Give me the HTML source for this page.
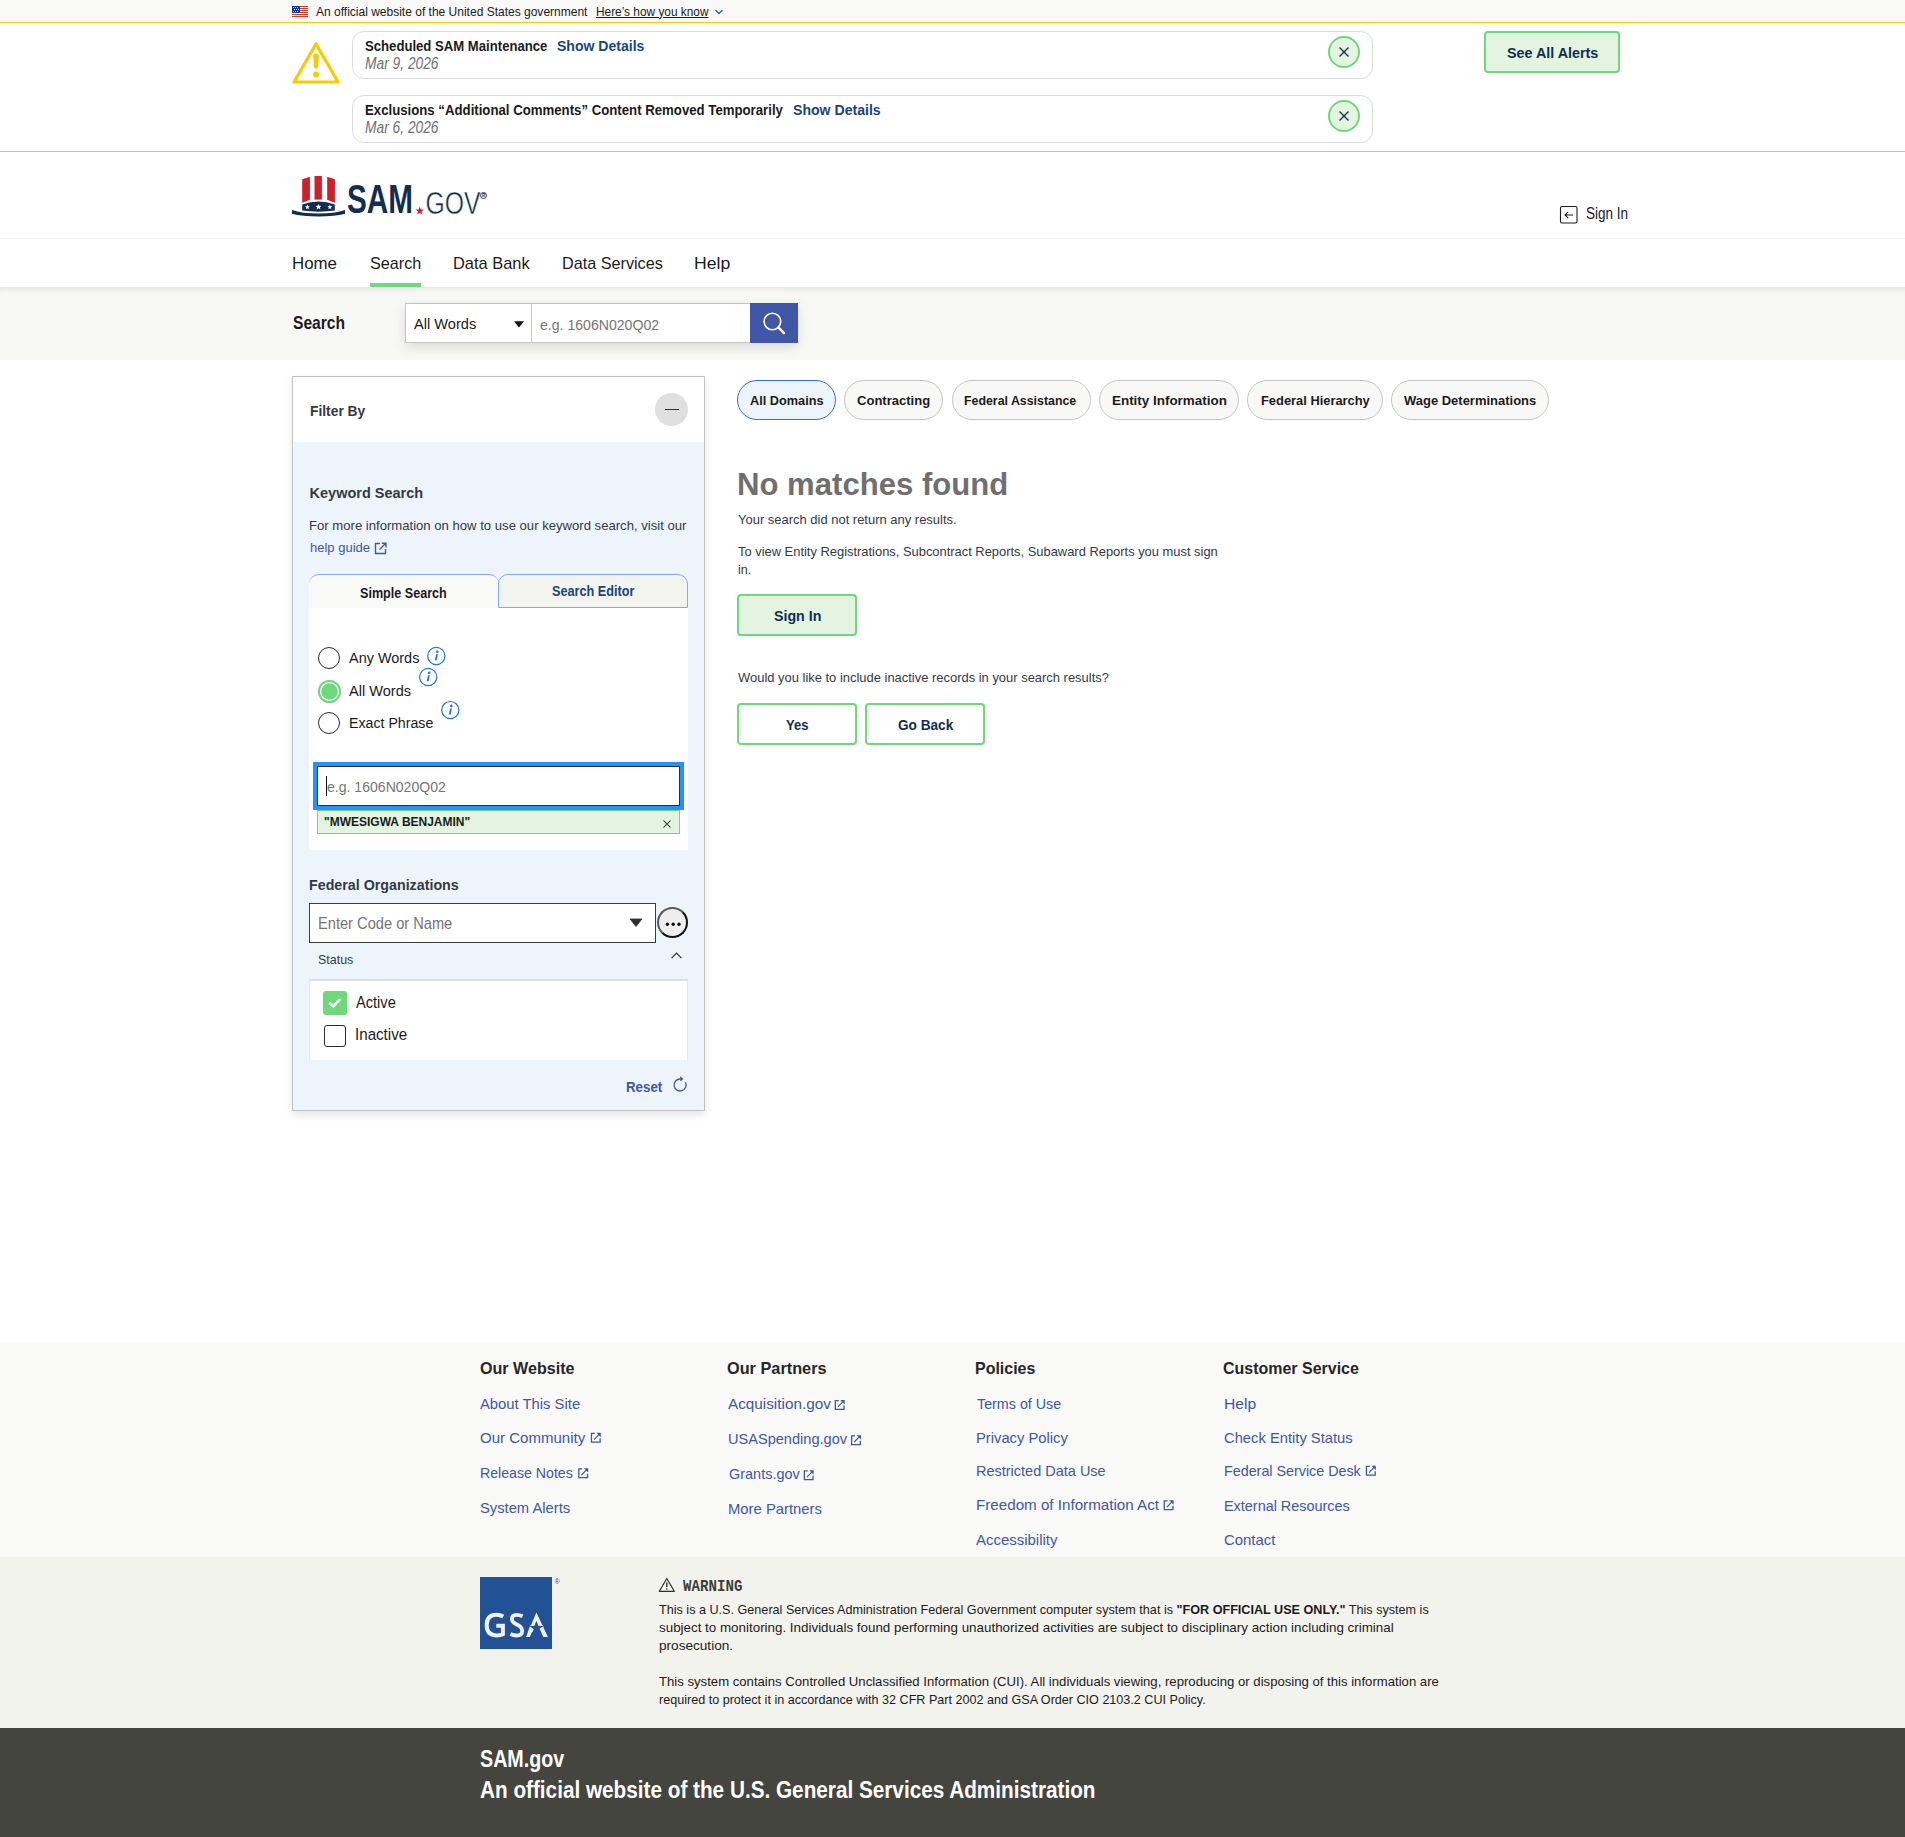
<!DOCTYPE html>
<html><head><meta charset="utf-8"><title>SAM.gov Search</title>
<style>
html,body{margin:0;padding:0;}
body{width:1905px;height:1837px;position:relative;overflow:hidden;background:#fff;font-family:"Liberation Sans",sans-serif;}
.a{position:absolute;box-sizing:border-box;}
.t{position:absolute;line-height:1;white-space:pre;transform-origin:0 0;}
svg.a{overflow:visible;}

</style></head><body>
<!-- gov banner -->
<div class="a" style="left:0;top:0;width:1905px;height:22px;background:#f9f9f7"></div>
<div class="a" style="left:0;top:22px;width:1905px;height:1px;background:#fbcb0a"></div>
<svg class="a" style="left:292px;top:6px" width="16" height="11" viewBox="0 0 16 11">
  <rect width="16" height="11" fill="#fff"/>
  <g fill="#d83b1e"><rect y="0" width="16" height="1"/><rect y="2" width="16" height="1"/><rect y="4" width="16" height="1"/><rect y="6" width="16" height="1"/><rect y="8" width="16" height="1"/><rect y="10" width="16" height="1"/></g>
  <rect width="8" height="7" fill="#0d3a9c"/>
  <g fill="#fff"><circle cx="1.5" cy="1.5" r=".5"/><circle cx="3.5" cy="1.5" r=".5"/><circle cx="5.5" cy="1.5" r=".5"/><circle cx="2.5" cy="3.5" r=".5"/><circle cx="4.5" cy="3.5" r=".5"/><circle cx="6.5" cy="3.5" r=".5"/><circle cx="1.5" cy="5.5" r=".5"/><circle cx="3.5" cy="5.5" r=".5"/><circle cx="5.5" cy="5.5" r=".5"/></g>
</svg>
<svg class="a" style="left:714px;top:8px" width="10" height="8" viewBox="0 0 10 8"><path d="M1.5 2 L5 5.5 L8.5 2" fill="none" stroke="#2a5fb0" stroke-width="1.4"/></svg>

<!-- alerts -->
<div class="a" style="left:0;top:151px;width:1905px;height:1px;background:#fbcb0a"></div>
<svg class="a" style="left:291px;top:41px" width="50" height="44" viewBox="0 0 50 44">
  <path d="M25 3 L47 41 L3 41 Z" fill="none" stroke="#f8cb00" stroke-width="3.2" stroke-linejoin="round"/>
  <path d="M22.2 15.2 Q22.2 12.6 25 12.6 Q27.8 12.6 27.8 15.2 L26.9 26.6 Q26.8 27.6 25 27.6 Q23.2 27.6 23.1 26.6 Z" fill="#f8cb00"/>
  <circle cx="25" cy="33.5" r="3" fill="#f8cb00"/>
</svg>
<div class="a" style="left:352px;top:31px;width:1021px;height:48px;border:1px solid #dcdcdc;border-radius:12px"></div>
<div class="a" style="left:352px;top:95px;width:1021px;height:48px;border:1px solid #dcdcdc;border-radius:12px"></div>
<div class="a" style="left:1328px;top:36px;width:32px;height:32px;border:2px solid #6fd87a;border-radius:50%;background:#e3f4e1"></div>
<div class="a" style="left:1328px;top:100px;width:32px;height:32px;border:2px solid #6fd87a;border-radius:50%;background:#e3f4e1"></div>
<svg class="a" style="left:1338px;top:46px" width="12" height="12" viewBox="0 0 12 12"><path d="M1.5 1.5 L10.5 10.5 M10.5 1.5 L1.5 10.5" stroke="#1b2b48" stroke-width="1.4"/></svg>
<svg class="a" style="left:1338px;top:110px" width="12" height="12" viewBox="0 0 12 12"><path d="M1.5 1.5 L10.5 10.5 M10.5 1.5 L1.5 10.5" stroke="#1b2b48" stroke-width="1.4"/></svg>
<div class="a" style="left:1484px;top:31px;width:136px;height:42px;border:2px solid #6fd87a;border-radius:4px;background:#e3f4e1"></div>

<!-- header logo -->
<svg class="a" style="left:288px;top:170px" width="60" height="50" viewBox="288 170 60 50">
  <g fill="#cf1f2a">
    <path d="M302.2 179.2 L309.9 176.8 L309.9 199.8 L302.2 202.8 Z"/>
    <path d="M314.5 176 L321.9 176 L321.9 199.6 L314.5 199.6 Z"/>
    <path d="M327.2 176.8 L334.9 179.2 L334.9 202.8 L327.2 199.8 Z"/>
  </g>
  <g fill="#112e51">
    <path d="M302.2 204.6 Q318.5 198.5 334.8 204.6 L334.8 210.6 Q318.5 212.8 302.2 210.6 Z"/>
    <path d="M292 210 Q302 213.5 318.5 213.5 Q335 213.5 345 210 L345 213.8 Q335 216.5 318.5 216.5 Q302 216.5 292 213.8 Z"/>
  </g>
  <g fill="#fff">
    <path d="M307.4 204.6 l.75 1.6 1.7.15 -1.3 1.1 .4 1.7 -1.55 -.9 -1.55 .9 .4 -1.7 -1.3 -1.1 1.7 -.15z"/>
    <path d="M318.5 203.9 l.9 1.9 2 .2 -1.5 1.3 .45 2 -1.85 -1.05 -1.85 1.05 .45 -2 -1.5 -1.3 2 -.2z"/>
    <path d="M329.9 204.6 l.75 1.6 1.7.15 -1.3 1.1 .4 1.7 -1.55 -.9 -1.55 .9 .4 -1.7 -1.3 -1.1 1.7 -.15z"/>
  </g>
</svg>
<svg class="a" style="left:340px;top:180px" width="160" height="40" viewBox="340 180 160 40">
  <text x="347" y="213.3" font-family="Liberation Sans" font-weight="700" font-size="40.8" fill="#112e51" textLength="66" lengthAdjust="spacingAndGlyphs">SAM</text>
  <path d="M419.8 206.5 l1.05 2.9 3.1 .1 -2.45 1.9 .85 3 -2.55 -1.75 -2.55 1.75 .85 -3 -2.45 -1.9 3.1 -.1z" fill="#cf1f2a"/>
  <text x="425.5" y="213.7" font-family="Liberation Sans" font-weight="400" font-size="31.5" fill="#112e51" stroke="#fff" stroke-width="0.45" textLength="55" lengthAdjust="spacingAndGlyphs" style="letter-spacing:0">GOV</text>
  <circle cx="483.5" cy="195.5" r="3" fill="none" stroke="#112e51" stroke-width="0.9"/>
  <text x="481.9" y="197.4" font-family="Liberation Sans" font-weight="700" font-size="4.8" fill="#112e51">R</text>
</svg>
<svg class="a" style="left:1559px;top:205px" width="20" height="19" viewBox="0 0 20 19">
  <rect x="1.5" y="1.5" width="16.5" height="16.5" rx="1.5" fill="none" stroke="#1b1b1b" stroke-width="1.1"/>
  <path d="M14 10 L6 10 M9.2 6.8 L6 10 L9.2 13.2" fill="none" stroke="#1b1b1b" stroke-width="1.1"/>
</svg>
<div class="a" style="left:0;top:238px;width:1905px;height:1px;background:#f1f1ed"></div>
<div class="a" style="left:370px;top:283px;width:51px;height:4px;background:#6cdb78"></div>

<!-- search bar -->
<div class="a" style="left:0;top:287px;width:1905px;height:73px;background:#f8f8f6;box-shadow:inset 0 6px 6px -4px rgba(0,0,0,0.09)"></div>
<div class="a" style="left:405px;top:303px;width:393px;height:40px;box-shadow:0 4px 12px rgba(0,0,0,0.13)"></div>
<div class="a" style="left:405px;top:303px;width:127px;height:40px;background:#fff;border:1px solid #c4c4c4"></div>
<svg class="a" style="left:513px;top:320px" width="12" height="9" viewBox="0 0 12 9"><path d="M1 1.2 L11 1.2 L6 7.5 Z" fill="#111"/></svg>
<div class="a" style="left:531px;top:303px;width:220px;height:40px;background:#fff;border:1px solid #c4c4c4"></div>
<div class="a" style="left:750px;top:303px;width:48px;height:40px;background:#3f57a6"></div>
<svg class="a" style="left:760px;top:310px" width="28" height="28" viewBox="760 310 28 28">
  <circle cx="772.4" cy="321.5" r="8.3" fill="none" stroke="#fff" stroke-width="1.6"/>
  <path d="M778.3 327.4 L784 333.1" stroke="#fff" stroke-width="2.2" stroke-linecap="round"/>
</svg>

<!-- filter panel -->
<div class="a" style="left:292px;top:376px;width:413px;height:735px;background:#edf4fb;border:1px solid #c2c2c2;box-shadow:0 4px 8px rgba(0,0,0,0.11)"></div>
<div class="a" style="left:293px;top:377px;width:411px;height:65px;background:#fff"></div>
<div class="a" style="left:655px;top:393px;width:33px;height:33px;border-radius:50%;background:#e0e0e0"></div>
<div class="a" style="left:665px;top:408.7px;width:14px;height:1.6px;background:#13316b"></div>
<svg class="a" style="left:374px;top:542px" width="14" height="13" viewBox="0 0 14 13">
  <path d="M6 1.5 L1.5 1.5 L1.5 11.5 L11.5 11.5 L11.5 7" fill="none" stroke="#3f57a6" stroke-width="1.4"/>
  <path d="M5.5 7.5 L11.5 1.5 M7.8 1.2 L12 1.2 L12 5.4" fill="none" stroke="#3f57a6" stroke-width="1.4"/>
</svg>
<!-- tabs -->
<div class="a" style="left:309px;top:574px;width:190px;height:34px;background:#f9f9f7;border-top:1px solid #80aaff;border-radius:10px 10px 0 0"></div>
<div class="a" style="left:498px;top:574px;width:190px;height:34px;background:#f3f3ef;border:1px solid #80aaff;border-radius:10px 10px 0 0"></div>
<div class="a" style="left:309px;top:608px;width:379px;height:242px;background:#fff"></div>
<!-- radios -->
<div class="a" style="left:318px;top:646.7px;width:22px;height:22px;border:1.5px solid #2b2b2b;border-radius:50%"></div>
<div class="a" style="left:317.5px;top:679.5px;width:23px;height:23px;border-radius:50%;background:#6fd87a;box-shadow:inset 0 0 0 2px #6fd87a, inset 0 0 0 3.2px #fff"></div>
<div class="a" style="left:318px;top:712px;width:22px;height:22px;border:1.5px solid #2b2b2b;border-radius:50%"></div>
<svg class="a" style="left:425px;top:645px" width="40" height="80" viewBox="425 645 40 80">
  <g fill="none" stroke="#2672de" stroke-width="1.2">
    <circle cx="436.3" cy="656" r="8.6"/><circle cx="428.2" cy="677" r="8.6"/><circle cx="450.3" cy="710.1" r="8.6"/>
  </g>
  <g fill="#2672de">
    <circle cx="437.3" cy="651.8" r="1.3"/><path d="M436.1 654.3 L437.9 654.3 L436.7 660.3 L434.8 660.3 Z"/>
    <circle cx="429.2" cy="672.8" r="1.3"/><path d="M428 675.3 L429.8 675.3 L428.6 681.3 L426.7 681.3 Z"/>
    <circle cx="451.3" cy="705.9" r="1.3"/><path d="M450.1 708.4 L451.9 708.4 L450.7 714.4 L448.8 714.4 Z"/>
  </g>
</svg>
<!-- focused input -->
<div class="a" style="left:313px;top:762px;width:371px;height:48px;background:#2491ff"></div>
<div class="a" style="left:317px;top:766px;width:363px;height:40px;background:#fff;border:1.5px solid #2e2e2a"></div>
<div class="a" style="left:326px;top:776px;width:1px;height:20px;background:#111"></div>
<div class="a" style="left:317px;top:810px;width:363px;height:24px;background:#e3f4e1;border:1px solid #6fd87a"></div>
<svg class="a" style="left:662px;top:818.5px" width="10" height="10" viewBox="0 0 10 10"><path d="M1.5 1.5 L8.5 8.5 M8.5 1.5 L1.5 8.5" stroke="#1b1b1b" stroke-width="1.05"/></svg>
<!-- federal orgs -->
<div class="a" style="left:309px;top:903px;width:347px;height:40px;background:#fff;border:1px solid #3b3b37"></div>
<svg class="a" style="left:629px;top:918px" width="14" height="10" viewBox="0 0 14 10"><path d="M1 1 L13 1 L7 8.5 Z" fill="#2e2e2a" stroke="#2e2e2a" stroke-width="0.8" stroke-linejoin="round"/></svg>
<div class="a" style="left:657px;top:907px;width:31px;height:31px;border-radius:50%;background:#eeeeee;border:2px solid #111;border-color:#5a5a5a #111 #111 #5a5a5a"></div>
<svg class="a" style="left:660px;top:917px" width="26" height="14" viewBox="660 917 26 14">
  <circle cx="667.4" cy="924.3" r="1.7" fill="#111"/><circle cx="673.2" cy="924.3" r="1.7" fill="#111"/><circle cx="679" cy="924.3" r="1.7" fill="#111"/>
</svg>
<svg class="a" style="left:670px;top:950px" width="13" height="10" viewBox="670 950 13 10"><path d="M671.6 958.1 L676.5 953 L681.4 958.1" fill="none" stroke="#2e2e2a" stroke-width="1.2"/></svg>
<!-- status -->
<div class="a" style="left:309px;top:979px;width:379px;height:81px;background:#fff;border-top:2px solid #dedede;border-left:1px solid #e8e8e8;border-right:1px solid #e8e8e8"></div>
<div class="a" style="left:323px;top:991px;width:24px;height:24px;border-radius:3px;background:#6fd87a"></div>
<svg class="a" style="left:323px;top:991px" width="24" height="24" viewBox="0 0 24 24"><path d="M7 12.3 L10.3 15.4 L16.5 8.8" fill="none" stroke="#fff" stroke-width="2.6" stroke-linecap="round" stroke-linejoin="round"/></svg>
<div class="a" style="left:324px;top:1025px;width:22px;height:22px;border-radius:3px;border:1.5px solid #2b2b2b;background:#fff"></div>
<svg class="a" style="left:671px;top:1074px" width="18" height="20" viewBox="671 1074 18 20">
  <path d="M685.4 1082.2 A6 6 0 1 1 680.3 1079" fill="none" stroke="#3f57a6" stroke-width="1.3"/>
  <path d="M680.2 1076 L683.4 1078.9 L680.2 1081.5 Z" fill="#3f57a6"/>
</svg>

<!-- pills -->
<div class="a" style="left:737px;top:380px;width:99px;height:40px;border-radius:20px;border:1px solid #2d6fe0;background:#edf4fb"></div>
<div class="a" style="left:844px;top:380px;width:99px;height:40px;border-radius:20px;border:1px solid #c6c6c6;background:#f8f8f6"></div>
<div class="a" style="left:951.5px;top:380px;width:139px;height:40px;border-radius:20px;border:1px solid #c6c6c6;background:#f8f8f6"></div>
<div class="a" style="left:1099px;top:380px;width:139.5px;height:40px;border-radius:20px;border:1px solid #c6c6c6;background:#f8f8f6"></div>
<div class="a" style="left:1247px;top:380px;width:135.5px;height:40px;border-radius:20px;border:1px solid #c6c6c6;background:#f8f8f6"></div>
<div class="a" style="left:1391px;top:380px;width:157.5px;height:40px;border-radius:20px;border:1px solid #c6c6c6;background:#f8f8f6"></div>

<!-- result buttons -->
<div class="a" style="left:737px;top:594px;width:120px;height:42px;border:2px solid #6fd87a;border-radius:4px;background:#e3f4e1"></div>
<div class="a" style="left:737px;top:703px;width:120px;height:42px;border:2px solid #6fd87a;border-radius:4px;background:#fff"></div>
<div class="a" style="left:865px;top:703px;width:120px;height:42px;border:2px solid #6fd87a;border-radius:4px;background:#fff"></div>

<!-- footer -->
<div class="a" style="left:0;top:1343px;width:1905px;height:214px;background:#f9f9f7"></div>
<div class="a" style="left:0;top:1557px;width:1905px;height:171px;background:#f3f3ee"></div>
<div class="a" style="left:0;top:1728px;width:1905px;height:109px;background:#454540"></div>
<!-- footer ext icons -->
<svg class="a" style="left:0;top:0" width="1905" height="1837" viewBox="0 0 1905 1837">
  <defs>
    <g id="ext">
      <path d="M4 0.65 L0.65 0.65 L0.65 9.35 L9.35 9.35 L9.35 5.5" fill="none" stroke="#3f57a6" stroke-width="1.3"/>
      <path d="M3.2 6.8 L8.6 1.4" fill="none" stroke="#3f57a6" stroke-width="1.2"/>
      <path d="M5.6 0 L10 0 L10 4.4 Z" fill="#3f57a6"/>
    </g>
  </defs>
  <use href="#ext" x="590.8" y="1432.8"/>
  <use href="#ext" x="578.2" y="1468.2"/>
  <use href="#ext" x="834.7" y="1400"/>
  <use href="#ext" x="851" y="1435.2"/>
  <use href="#ext" x="803.7" y="1470.3"/>
  <use href="#ext" x="1163.6" y="1500.3"/>
  <use href="#ext" x="1365.8" y="1465.8"/>
</svg>
<!-- GSA logo -->
<div class="a" style="left:480px;top:1577px;width:72px;height:72px;background:#225196"></div>
<svg class="a" style="left:480px;top:1577px" width="90" height="80" viewBox="480 1577 90 80">
  <g fill="none" stroke="#f1f1ed">
    <path d="M503.3 1616.6 Q500.2 1614.8 496.3 1614.8 Q486.7 1615 486.7 1625.1 Q486.7 1635.4 496.3 1635.4 Q500.6 1635.4 502.9 1634.2 L502.9 1625.7 L496.3 1625.7" stroke-width="4"/>
    <path d="M522.6 1616.2 Q519.6 1614.8 516.6 1614.8 Q511.9 1614.9 511.9 1619.1 Q511.9 1622.3 516.8 1624.5 Q522.2 1626.9 522.2 1630.9 Q522.2 1635.5 516.4 1635.5 Q513.2 1635.5 510.5 1634" stroke-width="3.8"/>
  </g>
  <path d="M536.4 1612.6 L547.9 1637 L543.3 1637 L536.4 1621.6 L529.8 1637 L526 1637 Z" fill="#f1f1ed"/>
  <path d="M530 1625.6 L543 1625.6 L543.6 1627.4 L531 1632.5 L529.4 1635.8 L527.6 1633.2 Z" fill="#f1f1ed"/>
  <polygon points="536.40,1620.80 538.10,1625.85 543.44,1625.91 539.16,1629.10 540.75,1634.19 536.40,1631.10 532.05,1634.19 533.64,1629.10 529.36,1625.91 534.70,1625.85" fill="#225196"/>
  <text x="554.5" y="1583.5" font-family="Liberation Sans" font-size="7" fill="#225196">&#174;</text>
</svg>
<!-- warning triangle -->
<svg class="a" style="left:657px;top:1576px" width="20" height="18" viewBox="657 1576 20 18">
  <path d="M666.8 1578.5 L674.3 1591.3 L659.3 1591.3 Z" fill="none" stroke="#2e2e2a" stroke-width="1.2" stroke-linejoin="round"/>
  <path d="M666.8 1582.5 L666.8 1587" stroke="#2e2e2a" stroke-width="1.4"/>
  <circle cx="666.8" cy="1589" r="0.8" fill="#2e2e2a"/>
</svg>

<div class='t' style='left:315.70px;top:4.58px;font-family:"Liberation Sans", sans-serif;font-size:13.043px;font-weight:400;color:#1b1b1b;transform:scaleX(0.9214)'>An official website of the United States government</div>
<div class='t' style='left:596.00px;top:4.58px;font-family:"Liberation Sans", sans-serif;font-size:13.043px;font-weight:400;color:#1b1b1b;text-decoration:underline;text-underline-offset:1px;transform:scaleX(0.9097)'>Here’s how you know</div>
<div class='t' style='left:365.30px;top:39.45px;font-family:"Liberation Sans", sans-serif;font-size:14.493px;font-weight:700;color:#1b1b1b;transform:scaleX(0.9065)'>Scheduled SAM Maintenance</div>
<div class='t' style='left:556.60px;top:39.45px;font-family:"Liberation Sans", sans-serif;font-size:14.493px;font-weight:700;color:#1a4480;transform:scaleX(0.9689)'>Show Details</div>
<div class='t' style='left:365.30px;top:55.67px;font-family:"Liberation Sans", sans-serif;font-size:15.652px;font-weight:400;color:#6f6f6f;font-style:italic;transform:scaleX(0.8810)'>Mar 9, 2026</div>
<div class='t' style='left:365.30px;top:103.45px;font-family:"Liberation Sans", sans-serif;font-size:14.493px;font-weight:700;color:#1b1b1b;transform:scaleX(0.9115)'>Exclusions “Additional Comments” Content Removed Temporarily</div>
<div class='t' style='left:792.90px;top:103.45px;font-family:"Liberation Sans", sans-serif;font-size:14.493px;font-weight:700;color:#1a4480;transform:scaleX(0.9722)'>Show Details</div>
<div class='t' style='left:365.30px;top:119.67px;font-family:"Liberation Sans", sans-serif;font-size:15.652px;font-weight:400;color:#6f6f6f;font-style:italic;transform:scaleX(0.8810)'>Mar 6, 2026</div>
<div class='t' style='left:1507.00px;top:46.31px;font-family:"Liberation Sans", sans-serif;font-size:14.783px;font-weight:700;color:#112e51;transform:scaleX(0.9691)'>See All Alerts</div>
<div class='t' style='left:1586.00px;top:205.73px;font-family:"Liberation Sans", sans-serif;font-size:15.942px;font-weight:400;color:#1b1b1b;transform:scaleX(0.8490)'>Sign In</div>
<div class='t' style='left:292.30px;top:255.69px;font-family:"Liberation Sans", sans-serif;font-size:16.812px;font-weight:400;color:#1b1b1b;transform:scaleX(1.0045)'>Home</div>
<div class='t' style='left:369.90px;top:255.69px;font-family:"Liberation Sans", sans-serif;font-size:16.812px;font-weight:400;color:#1b1b1b;transform:scaleX(0.9623)'>Search</div>
<div class='t' style='left:452.82px;top:255.69px;font-family:"Liberation Sans", sans-serif;font-size:16.812px;font-weight:400;color:#1b1b1b;transform:scaleX(0.9769)'>Data Bank</div>
<div class='t' style='left:561.94px;top:255.69px;font-family:"Liberation Sans", sans-serif;font-size:16.812px;font-weight:400;color:#1b1b1b;transform:scaleX(0.9644)'>Data Services</div>
<div class='t' style='left:694.45px;top:255.69px;font-family:"Liberation Sans", sans-serif;font-size:16.812px;font-weight:400;color:#1b1b1b;transform:scaleX(1.0485)'>Help</div>
<div class='t' style='left:292.70px;top:314.84px;font-family:"Liberation Sans", sans-serif;font-size:17.826px;font-weight:700;color:#1b1b1b;transform:scaleX(0.8763)'>Search</div>
<div class='t' style='left:414.00px;top:315.80px;font-family:"Liberation Sans", sans-serif;font-size:15.507px;font-weight:400;color:#1b1b1b;transform:scaleX(0.9424)'>All Words</div>
<div class='t' style='left:540.20px;top:316.50px;font-family:"Liberation Sans", sans-serif;font-size:15.507px;font-weight:400;color:#757575;transform:scaleX(0.9092)'>e.g. 1606N020Q02</div>
<div class='t' style='left:310.00px;top:404.35px;font-family:"Liberation Sans", sans-serif;font-size:14.493px;font-weight:700;color:#323a45;transform:scaleX(0.9534)'>Filter By</div>
<div class='t' style='left:309.60px;top:486.45px;font-family:"Liberation Sans", sans-serif;font-size:14.493px;font-weight:700;color:#323a45;transform:scaleX(1.0000)'>Keyword Search</div>
<div class='t' style='left:308.54px;top:518.89px;font-family:"Liberation Sans", sans-serif;font-size:13.623px;font-weight:400;color:#323a45;transform:scaleX(0.9632)'>For more information on how to use our keyword search, visit our</div>
<div class='t' style='left:309.50px;top:541.29px;font-family:"Liberation Sans", sans-serif;font-size:13.623px;font-weight:400;color:#3f57a6;transform:scaleX(0.9556)'>help guide</div>
<div class='t' style='left:360.20px;top:585.80px;font-family:"Liberation Sans", sans-serif;font-size:14.203px;font-weight:700;color:#1b1b1b;transform:scaleX(0.8876)'>Simple Search</div>
<div class='t' style='left:552.30px;top:583.58px;font-family:"Liberation Sans", sans-serif;font-size:14.348px;font-weight:700;color:#1a4480;transform:scaleX(0.8849)'>Search Editor</div>
<div class='t' style='left:349.00px;top:649.60px;font-family:"Liberation Sans", sans-serif;font-size:15.507px;font-weight:400;color:#1b1b1b;transform:scaleX(0.9320)'>Any Words</div>
<div class='t' style='left:349.00px;top:683.30px;font-family:"Liberation Sans", sans-serif;font-size:15.507px;font-weight:400;color:#1b1b1b;transform:scaleX(0.9394)'>All Words</div>
<div class='t' style='left:348.79px;top:715.40px;font-family:"Liberation Sans", sans-serif;font-size:15.507px;font-weight:400;color:#1b1b1b;transform:scaleX(0.9143)'>Exact Phrase</div>
<div class='t' style='left:326.50px;top:779.12px;font-family:"Liberation Sans", sans-serif;font-size:15.362px;font-weight:400;color:#757575;transform:scaleX(0.9155)'>e.g. 1606N020Q02</div>
<div class='t' style='left:323.60px;top:815.03px;font-family:"Liberation Sans", sans-serif;font-size:13.333px;font-weight:700;color:#1b1b1b;transform:scaleX(0.9000)'>"MWESIGWA BENJAMIN"</div>
<div class='t' style='left:308.56px;top:877.34px;font-family:"Liberation Sans", sans-serif;font-size:15.217px;font-weight:700;color:#323a45;transform:scaleX(0.9377)'>Federal Organizations</div>
<div class='t' style='left:317.58px;top:915.93px;font-family:"Liberation Sans", sans-serif;font-size:15.942px;font-weight:400;color:#757575;transform:scaleX(0.9186)'>Enter Code or Name</div>
<div class='t' style='left:317.60px;top:952.68px;font-family:"Liberation Sans", sans-serif;font-size:13.043px;font-weight:400;color:#323a45;transform:scaleX(0.9568)'>Status</div>
<div class='t' style='left:355.60px;top:995.43px;font-family:"Liberation Sans", sans-serif;font-size:15.942px;font-weight:400;color:#1b1b1b;transform:scaleX(0.9163)'>Active</div>
<div class='t' style='left:355.05px;top:1027.33px;font-family:"Liberation Sans", sans-serif;font-size:15.942px;font-weight:400;color:#1b1b1b;transform:scaleX(0.9500)'>Inactive</div>
<div class='t' style='left:625.70px;top:1079.55px;font-family:"Liberation Sans", sans-serif;font-size:14.493px;font-weight:700;color:#3f57a6;transform:scaleX(0.9200)'>Reset</div>
<div class='t' style='left:750.00px;top:393.69px;font-family:"Liberation Sans", sans-serif;font-size:13.623px;font-weight:700;color:#1b1b1b;transform:scaleX(0.9359)'>All Domains</div>
<div class='t' style='left:857.40px;top:393.69px;font-family:"Liberation Sans", sans-serif;font-size:13.623px;font-weight:700;color:#1b1b1b;transform:scaleX(0.9579)'>Contracting</div>
<div class='t' style='left:964.40px;top:393.69px;font-family:"Liberation Sans", sans-serif;font-size:13.623px;font-weight:700;color:#1b1b1b;transform:scaleX(0.9081)'>Federal Assistance</div>
<div class='t' style='left:1111.70px;top:393.69px;font-family:"Liberation Sans", sans-serif;font-size:13.623px;font-weight:700;color:#1b1b1b;transform:scaleX(0.9862)'>Entity Information</div>
<div class='t' style='left:1260.70px;top:393.69px;font-family:"Liberation Sans", sans-serif;font-size:13.623px;font-weight:700;color:#1b1b1b;transform:scaleX(0.9461)'>Federal Hierarchy</div>
<div class='t' style='left:1403.60px;top:393.69px;font-family:"Liberation Sans", sans-serif;font-size:13.623px;font-weight:700;color:#1b1b1b;transform:scaleX(0.9536)'>Wage Determinations</div>
<div class='t' style='left:737.15px;top:469.16px;font-family:"Liberation Sans", sans-serif;font-size:31.884px;font-weight:700;color:#6f6f6f;transform:scaleX(0.9755)'>No matches found</div>
<div class='t' style='left:737.60px;top:514.17px;font-family:"Liberation Sans", sans-serif;font-size:12.464px;font-weight:400;color:#323a45;transform:scaleX(1.0411)'>Your search did not return any results.</div>
<div class='t' style='left:737.60px;top:545.67px;font-family:"Liberation Sans", sans-serif;font-size:12.464px;font-weight:400;color:#323a45;transform:scaleX(1.0361)'>To view Entity Registrations, Subcontract Reports, Subaward Reports you must sign</div>
<div class='t' style='left:737.90px;top:564.37px;font-family:"Liberation Sans", sans-serif;font-size:12.464px;font-weight:400;color:#323a45;transform:scaleX(1.0077)'>in.</div>
<div class='t' style='left:773.60px;top:608.55px;font-family:"Liberation Sans", sans-serif;font-size:14.493px;font-weight:700;color:#112e51;transform:scaleX(0.9813)'>Sign In</div>
<div class='t' style='left:737.60px;top:671.97px;font-family:"Liberation Sans", sans-serif;font-size:12.464px;font-weight:400;color:#323a45;transform:scaleX(1.0392)'>Would you like to include inactive records in your search results?</div>
<div class='t' style='left:786.30px;top:718.25px;font-family:"Liberation Sans", sans-serif;font-size:14.493px;font-weight:700;color:#112e51;transform:scaleX(0.8960)'>Yes</div>
<div class='t' style='left:897.70px;top:718.25px;font-family:"Liberation Sans", sans-serif;font-size:14.493px;font-weight:700;color:#112e51;transform:scaleX(0.9407)'>Go Back</div>
<div class='t' style='left:479.90px;top:1361.17px;font-family:"Liberation Sans", sans-serif;font-size:16.957px;font-weight:700;color:#262626;transform:scaleX(0.9505)'>Our Website</div>
<div class='t' style='left:727.40px;top:1361.17px;font-family:"Liberation Sans", sans-serif;font-size:16.957px;font-weight:700;color:#262626;transform:scaleX(0.9612)'>Our Partners</div>
<div class='t' style='left:975.26px;top:1361.17px;font-family:"Liberation Sans", sans-serif;font-size:16.957px;font-weight:700;color:#262626;transform:scaleX(0.9429)'>Policies</div>
<div class='t' style='left:1223.40px;top:1361.17px;font-family:"Liberation Sans", sans-serif;font-size:16.957px;font-weight:700;color:#262626;transform:scaleX(0.9431)'>Customer Service</div>
<div class='t' style='left:480.00px;top:1396.89px;font-family:"Liberation Sans", sans-serif;font-size:14.928px;font-weight:400;color:#3f57a6;transform:scaleX(0.9931)'>About This Site</div>
<div class='t' style='left:480.20px;top:1431.29px;font-family:"Liberation Sans", sans-serif;font-size:14.928px;font-weight:400;color:#3f57a6;transform:scaleX(1.0076)'>Our Community</div>
<div class='t' style='left:479.95px;top:1466.49px;font-family:"Liberation Sans", sans-serif;font-size:14.928px;font-weight:400;color:#3f57a6;transform:scaleX(0.9485)'>Release Notes</div>
<div class='t' style='left:479.91px;top:1501.29px;font-family:"Liberation Sans", sans-serif;font-size:14.928px;font-weight:400;color:#3f57a6;transform:scaleX(0.9889)'>System Alerts</div>
<div class='t' style='left:728.00px;top:1397.49px;font-family:"Liberation Sans", sans-serif;font-size:14.928px;font-weight:400;color:#3f57a6;transform:scaleX(1.0250)'>Acquisition.gov</div>
<div class='t' style='left:727.92px;top:1432.29px;font-family:"Liberation Sans", sans-serif;font-size:14.928px;font-weight:400;color:#3f57a6;transform:scaleX(0.9769)'>USASpending.gov</div>
<div class='t' style='left:728.90px;top:1467.49px;font-family:"Liberation Sans", sans-serif;font-size:14.928px;font-weight:400;color:#3f57a6;transform:scaleX(0.9699)'>Grants.gov</div>
<div class='t' style='left:727.91px;top:1502.29px;font-family:"Liberation Sans", sans-serif;font-size:14.928px;font-weight:400;color:#3f57a6;transform:scaleX(0.9946)'>More Partners</div>
<div class='t' style='left:976.90px;top:1396.89px;font-family:"Liberation Sans", sans-serif;font-size:14.928px;font-weight:400;color:#3f57a6;transform:scaleX(0.9591)'>Terms of Use</div>
<div class='t' style='left:975.91px;top:1431.29px;font-family:"Liberation Sans", sans-serif;font-size:14.928px;font-weight:400;color:#3f57a6;transform:scaleX(0.9891)'>Privacy Policy</div>
<div class='t' style='left:975.93px;top:1463.99px;font-family:"Liberation Sans", sans-serif;font-size:14.928px;font-weight:400;color:#3f57a6;transform:scaleX(0.9720)'>Restricted Data Use</div>
<div class='t' style='left:975.88px;top:1498.29px;font-family:"Liberation Sans", sans-serif;font-size:14.928px;font-weight:400;color:#3f57a6;transform:scaleX(1.0179)'>Freedom of Information Act</div>
<div class='t' style='left:976.00px;top:1533.09px;font-family:"Liberation Sans", sans-serif;font-size:14.928px;font-weight:400;color:#3f57a6;transform:scaleX(1.0037)'>Accessibility</div>
<div class='t' style='left:1223.85px;top:1396.89px;font-family:"Liberation Sans", sans-serif;font-size:14.928px;font-weight:400;color:#3f57a6;transform:scaleX(1.0517)'>Help</div>
<div class='t' style='left:1224.00px;top:1431.29px;font-family:"Liberation Sans", sans-serif;font-size:14.928px;font-weight:400;color:#3f57a6;transform:scaleX(0.9892)'>Check Entity Status</div>
<div class='t' style='left:1223.94px;top:1463.99px;font-family:"Liberation Sans", sans-serif;font-size:14.928px;font-weight:400;color:#3f57a6;transform:scaleX(0.9599)'>Federal Service Desk</div>
<div class='t' style='left:1223.93px;top:1499.29px;font-family:"Liberation Sans", sans-serif;font-size:14.928px;font-weight:400;color:#3f57a6;transform:scaleX(0.9667)'>External Resources</div>
<div class='t' style='left:1224.00px;top:1533.09px;font-family:"Liberation Sans", sans-serif;font-size:14.928px;font-weight:400;color:#3f57a6;transform:scaleX(1.0000)'>Contact</div>
<div class='t' style='left:683.10px;top:1579.10px;font-family:"Liberation Mono", monospace;font-size:16.212px;font-weight:700;color:#3d3d3a;transform:scaleX(0.8735)'>WARNING</div>
<div class='t' style='left:659.00px;top:1603.19px;font-family:"Liberation Sans", sans-serif;font-size:13.623px;font-weight:400;color:#1b1b1b;transform:scaleX(0.9271)'>This is a U.S. General Services Administration Federal Government computer system that is <b>"FOR OFFICIAL USE ONLY."</b> This system is</div>
<div class='t' style='left:659.00px;top:1620.99px;font-family:"Liberation Sans", sans-serif;font-size:13.623px;font-weight:400;color:#1b1b1b;transform:scaleX(0.9830)'>subject to monitoring. Individuals found performing unauthorized activities are subject to disciplinary action including criminal</div>
<div class='t' style='left:659.00px;top:1638.89px;font-family:"Liberation Sans", sans-serif;font-size:13.623px;font-weight:400;color:#1b1b1b;transform:scaleX(0.9986)'>prosecution.</div>
<div class='t' style='left:659.00px;top:1675.09px;font-family:"Liberation Sans", sans-serif;font-size:13.623px;font-weight:400;color:#1b1b1b;transform:scaleX(0.9653)'>This system contains Controlled Unclassified Information (CUI). All individuals viewing, reproducing or disposing of this information are</div>
<div class='t' style='left:659.00px;top:1692.99px;font-family:"Liberation Sans", sans-serif;font-size:13.623px;font-weight:400;color:#1b1b1b;transform:scaleX(0.9245)'>required to protect it in accordance with 32 CFR Part 2002 and GSA Order CIO 2103.2 CUI Policy.</div>
<div class='t' style='left:480.30px;top:1747.56px;font-family:"Liberation Sans", sans-serif;font-size:23.478px;font-weight:700;color:#ffffff;transform:scaleX(0.8386)'>SAM.gov</div>
<div class='t' style='left:479.90px;top:1778.93px;font-family:"Liberation Sans", sans-serif;font-size:23.043px;font-weight:700;color:#ffffff;transform:scaleX(0.9000)'>An official website of the U.S. General Services Administration</div>
</body></html>
